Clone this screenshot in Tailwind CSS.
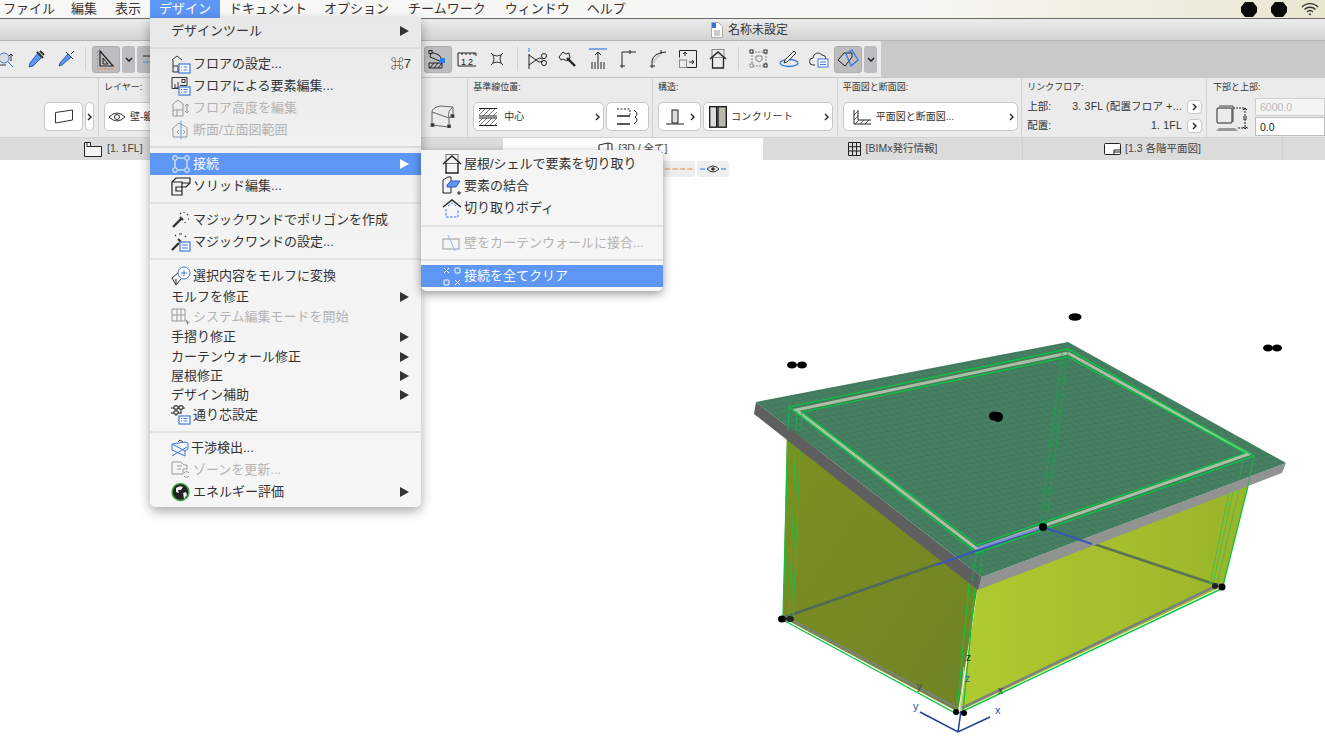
<!DOCTYPE html>
<html lang="ja">
<head>
    <meta charset="UTF-8">
    <title>名称未設定</title>
    <script src="https://cdn.jsdelivr.net/npm/@tailwindcss/browser@4"></script>
</head>
<body class="w-[1325px] h-[751px] overflow-hidden bg-white text-[#333] font-['Liberation_Sans','Noto_Sans_CJK_JP',sans-serif]">
<div class="relative flex flex-col w-[1325px] h-[751px]">

    <!-- menu bar -->
    <div class="flex items-center h-[19px] border-b border-[#6a6a66] bg-linear-to-r from-[#f8f8f8] via-[#f6f6f2] via-70% to-[#e9e6cf] text-[13px] leading-[18px] text-[#333]">
        <span class="pl-[10px] pr-[7px] ml-[-7px]">ファイル</span>
        <span class="px-[9px]">編集</span>
        <span class="px-[9px]">表示</span>
        <span class="w-[70px] h-[18px] text-center bg-[#5e96f5] text-white">デザイン</span>
        <span class="pl-[9px] pr-[7px]">ドキュメント</span>
        <span class="pl-[10px] pr-[9px]">オプション</span>
        <span class="pl-[10px] pr-[9px]">チームワーク</span>
        <span class="pl-[10px] pr-[7px]">ウィンドウ</span>
        <span class="px-[10px]">ヘルプ</span>
        <div class="ml-auto flex items-center gap-[14px] pr-[6px]">
            <svg width="16" height="15" viewBox="0 0 16 15"><polygon points="4,0 12,0 16,5 16,10 12,15 4,15 0,10 0,5" fill="#0a0a0a"/></svg>
            <svg width="16" height="15" viewBox="0 0 16 15"><polygon points="4,0 12,0 16,5 16,10 12,15 4,15 0,10 0,5" fill="#0a0a0a"/></svg>
            <svg width="18" height="14" viewBox="0 0 18 14" fill="none" stroke="#333" stroke-width="1.4"><path d="M1 5c4.500-4.500 11.500-4.500 16 0"/><path d="M3.500 7.500c3-3 8-3 11 0"/><path d="M6 10c1.700-1.600 4.300-1.600 6 0"/><circle cx="9" cy="12.300" r="1" fill="#333" stroke="none"/></svg>
        </div>
    </div>

    <!-- title bar -->
    <div class="flex items-center justify-center gap-[5px] h-[22px] pl-[174px] border-b border-[#b4b4b4] bg-linear-to-b from-[#ececec] to-[#d3d3d3] text-[12px] text-[#333]">
        <svg width="12" height="16" viewBox="0 0 12 16"><path d="M.5.500h7l4 4v11H.5z" fill="#fff" stroke="#aaa"/><path d="M1 1h4v5H1z" fill="#3b6fd8"/><path d="M3 9h6M3 11h6M3 13h6" stroke="#999"/></svg>
        <span>名称未設定</span>
    </div>

    <!-- toolbar -->
    <div class="flex h-[37px] bg-[#c9c9c9] border-b border-[#c6c6c6]">
        <div class="flex items-center w-[881px] bg-[#ebebeb] pr-[4px]">
            <div class="w-[30px] h-[27px] ml-[-9px] flex items-center justify-center">
                <svg width="30" height="22" viewBox="0 0 30 22" fill="none" stroke="#333"><circle cx="13" cy="10" r="5" fill="#ddd" stroke="#3b78e0"/><path d="M17 14l5 5" stroke="#3b78e0"/><path d="M20 13V6M18 8l2-2 2 2M7 17h8" /></svg>
            </div>
            <div class="w-[30px] h-[27px] flex items-center justify-center">
                <svg width="20" height="20" viewBox="0 0 20 20" fill="none" stroke="#333"><path d="M12 4l4 4-9 9-4 1 1-4z" fill="#5e96f5" stroke="#2b58a8"/><path d="M11 3l6 6M14 2l4 4" stroke-width="2"/></svg>
            </div>
            <div class="w-[30px] h-[27px] flex items-center justify-center">
                <svg width="20" height="20" viewBox="0 0 20 20" fill="none" stroke="#333"><path d="M12 5l3 3-9 8-3 1 1-3z" fill="#5e96f5" stroke="#2b58a8"/><path d="M10 3l7 7M15 5l3-3"/></svg>
            </div>
            <div class="w-px h-[24px] ml-[4px] bg-[#d0d0d0]"></div>
            <div class="flex items-center justify-center w-[28px] h-[27px] ml-[6px] rounded-[3px] bg-[#bdbdc0] border border-[#adadad]">
                <svg width="20" height="22" viewBox="0 0 20 22" fill="none" stroke="#222"><path d="M4 3l13 15H4z" stroke-width="1.200"/><path d="M7 10l5 6H7z"/><path d="M1.500 3v18H18" stroke="#e8812f" stroke-dasharray="2 1.500"/></svg>
            </div>
            <div class="flex items-center justify-center w-[13px] h-[27px] ml-[2px] rounded-[3px] bg-[#bdbdc0]">
                <svg width="8" height="5" viewBox="0 0 8 5" fill="none" stroke="#222" stroke-width="1.500"><path d="M1 1l3 3 3-3"/></svg>
            </div>
            <div class="flex items-center pl-[6px] w-[16px] h-[27px] ml-[2px] rounded-[3px] bg-[#bdbdc0]">
                <svg width="7" height="8" viewBox="0 0 7 8" fill="none"><path d="M0 1h7" stroke="#222"/><path d="M0 7h7" stroke="#3b78e0" stroke-dasharray="2 1"/></svg>
            </div>

            <div class="flex items-center justify-center w-[28px] h-[27px] ml-auto rounded-[3px] bg-[#bdbdc0] border border-[#adadad]">
                <svg width="22" height="22" viewBox="0 0 22 22" fill="none" stroke="#222"><path d="M4 4l8 3 4 6M3 9l1-5M3 9l12 5"/><rect x="2" y="2.500" width="3" height="3" fill="#bbb"/><path d="M2 15h13v5H2z" stroke-width="1"/><path d="M3 20l4-5M7 20l4-5M11 20l4-5"/><rect x="13" y="10" width="5" height="5" fill="#2f7bf0" stroke="none"/></svg>
            </div>
            <div class="w-[30px] h-[27px] flex items-center justify-center">
                <svg width="20" height="15" viewBox="0 0 20 15" fill="none" stroke="#222"><path d="M1 1h18v3M1 14V1M19 14H1M5 1v2M9 1v2M13 1v2M17 1v2"/><text x="4" y="12.500" font-size="9" fill="#222" stroke="none" font-family="Liberation Sans">1</text><text x="11" y="12.500" font-size="9" fill="#222" stroke="none" font-family="Liberation Sans">2</text></svg>
            </div>
            <div class="w-[30px] h-[27px] flex items-center justify-center">
                <svg width="14" height="14" viewBox="0 0 14 14" fill="none" stroke="#333"><path d="M3 3q4 2 8 0-2 4 0 8-4-2-8 0 2-4 0-8zM1 1l2 2M13 1l-2 2M1 13l2-2M13 13l-2-2"/></svg>
            </div>
            <div class="w-px h-[24px] ml-[5px] mr-[5px] bg-[#d0d0d0]"></div>
            <div class="w-[30px] h-[27px] flex items-center justify-center">
                <svg width="20" height="22" viewBox="0 0 20 22" fill="none" stroke="#222"><path d="M1 0v4" stroke="#3b78e0"/><path d="M1 6v15"/><path d="M1 7l10 7 4-1M1 17l10-7 4 1"/><circle cx="16" cy="8" r="2.500"/><circle cx="16" cy="15" r="2.500"/></svg>
            </div>
            <div class="w-[30px] h-[27px] flex items-center justify-center">
                <svg width="20" height="20" viewBox="0 0 20 20" fill="none" stroke="#222"><path d="M1 8l4-5 3 2 3-1 1 5-3 3-4-2-2 1z"/><path d="M9 9l8 8" stroke-width="2.400"/></svg>
            </div>
            <div class="w-[30px] h-[27px] flex items-center justify-center">
                <svg width="20" height="22" viewBox="0 0 20 22" fill="none" stroke="#222"><path d="M1 1h18" stroke="#3b78e0" stroke-width="1.200"/><path d="M10 4v17M7 7l3-3 3 3M4 14v7M7 14v7M13 14v7M16 14v7"/></svg>
            </div>
            <div class="w-[30px] h-[27px] flex items-center justify-center">
                <svg width="18" height="20" viewBox="0 0 18 20" fill="none" stroke="#222"><path d="M3 19V3h14M1 17h5M11 1v4" /></svg>
            </div>
            <div class="w-[30px] h-[27px] flex items-center justify-center">
                <svg width="18" height="20" viewBox="0 0 18 20" fill="none" stroke="#222"><path d="M3 19V12Q4 4 17 3M1 17h5M12 1v4"/><path d="M5 14q1-6 7-8" stroke="#ccc" stroke-width="2"/></svg>
            </div>
            <div class="w-[30px] h-[27px] flex items-center justify-center">
                <svg width="18" height="18" viewBox="0 0 18 18" fill="none" stroke="#222"><path d="M.5.500h17v17H8"/><path d="M.5.500v7"/><rect x=".5" y="10" width="7" height="7.500" stroke="#888"/><path d="M6 6V2M4 4l2-2 2 2M10 12h5M13 10l2 2-2 2"/></svg>
            </div>
            <div class="w-[30px] h-[27px] flex items-center justify-center">
                <svg width="18" height="20" viewBox="0 0 18 20" fill="none" stroke="#222"><rect x="3" y=".5" width="12" height="8" stroke="#888"/><path d="M1 10l8-7 8 7" stroke-width="1.500"/><path d="M3.500 9v10h11V9" stroke-width="1.300"/></svg>
            </div>
            <div class="w-px h-[24px] mx-[5px] bg-[#d0d0d0]"></div>
            <div class="w-[30px] h-[27px] flex items-center justify-center">
                <svg width="20" height="20" viewBox="0 0 20 20" fill="none" stroke="#222"><rect x="3" y="3" width="14" height="14" stroke="#888" stroke-dasharray="2 1"/><rect x="1" y="1" width="3" height="3" fill="#fff"/><rect x="15" y="1" width="3" height="3" fill="#fff"/><rect x="15" y="15" width="3" height="3" fill="#fff"/><rect x="1" y="15" width="3" height="3" fill="#fff" stroke="#888"/><path d="M7 7h6v4l-3 2-3-2z" stroke="#888"/></svg>
            </div>
            <div class="w-[30px] h-[27px] flex items-center justify-center">
                <svg width="20" height="18" viewBox="0 0 20 18" fill="none"><ellipse cx="10" cy="13" rx="9" ry="3.500" stroke="#3b78e0" stroke-width="1.300"/><path d="M15 1l2 2-9 9-3 1 1-3z" fill="#fff" stroke="#333"/></svg>
            </div>
            <div class="w-[30px] h-[27px] flex items-center justify-center">
                <svg width="20" height="18" viewBox="0 0 20 18" fill="none" stroke="#333"><path d="M6 15H4a3.500 3.500 0 0 1 0-7 5 5 0 0 1 9-3 4 4 0 0 1 4 4"/><rect x="9" y="9" width="10" height="8" fill="#fff" stroke="#3b78e0"/><path d="M11 12h6M11 14.500h6" stroke="#3b78e0"/></svg>
            </div>
            <div class="flex items-center justify-center w-[28px] h-[27px] rounded-[3px] bg-[#bdbdc0] border border-[#adadad]">
                <svg width="22" height="20" viewBox="0 0 22 20" fill="none"><path d="M1 11l6-7h8v4l-7 9z" stroke="#222" fill="#c8c8c8"/><path d="M9 5l6-4 6 10-7 6z" stroke="#3b78e0" stroke-width="1.300"/></svg>
            </div>
            <div class="flex items-center justify-center w-[13px] h-[27px] ml-[2px] rounded-[3px] bg-[#bdbdc0]">
                <svg width="8" height="5" viewBox="0 0 8 5" fill="none" stroke="#222" stroke-width="1.500"><path d="M1 1l3 3 3-3"/></svg>
            </div>
        </div>
    </div>

    <!-- info box -->
    <div class="flex h-[60px] bg-[#ebebeb] border-b border-[#d2d2d2] text-[#333]">
        <div class="flex items-end gap-[2px] w-[99px] pl-[44px] pb-[6px] border-r border-[#d2d2d2]">
            <div class="flex items-center justify-center w-[39px] h-[29px] bg-white rounded-[5px] border border-[#c8c8c8]">
                <svg width="20" height="15" viewBox="0 0 20 15" fill="none" stroke="#333"><path d="M1.500 3.500l17-2.500v10l-17 3z"/></svg>
            </div>
            <div class="flex items-center justify-center w-[9px] h-[29px] bg-white rounded-[5px] border border-[#c8c8c8]">
                <svg width="5" height="8" viewBox="0 0 5 8" fill="none" stroke="#222" stroke-width="1.400"><path d="M1 1l3 3-3 3"/></svg>
            </div>
        </div>
        <div class="w-[370px] pl-[5px] border-r border-[#d2d2d2]">
            <div class="h-[24px] pt-[3px] text-[9px] leading-[12px]">レイヤー:</div>
            <div class="flex items-center gap-[4px] w-[60px] h-[29px] pl-[3px] bg-white rounded-l-[5px] border border-[#c8c8c8] text-[10px] overflow-hidden whitespace-nowrap">
                <svg width="18" height="12" viewBox="0 0 18 12" class="shrink-0" fill="none" stroke="#333"><path d="M1 6q8-8 16 0-8 8-16 0z"/><circle cx="9" cy="6" r="2.500"/></svg>
                <span>壁-躯体</span>
            </div>
            <div class="absolute left-[430px] top-[104px]">
                <svg width="26" height="24" viewBox="0 0 26 24" fill="none" stroke="#666"><path d="M2 8v13l17 2 0-9-17-6zM2 8q0-4 8-6l13 1v9l-4 2M19 14q-2-7 4-11"/><rect x="1" y="19.500" width="3" height="3" fill="#222"/><rect x="17.500" y="21" width="3" height="3" fill="#222"/><rect x="21" y="10.500" width="3" height="3" fill="#222"/></svg>
            </div>
        </div>

        <div class="w-[185px] pl-[5px] border-r border-[#d2d2d2]">
            <div class="h-[24px] pt-[3px] text-[9px] leading-[12px]">基準線位置:</div>
            <div class="flex gap-[2px]">
                <div class="flex items-center w-[131px] h-[29px] pl-[5px] pr-[3px] bg-white rounded-[5px] border border-[#c8c8c8] text-[10px]">
                    <svg width="18" height="18" viewBox="0 0 18 18" fill="none" stroke="#222"><path d="M0 .5h18M0 8h18M0 10h18M0 17.500h18"/><path d="M0 3l3-3M0 7l7-7M4 8l8-8M9 8l8-8M14 8l4-4M0 14l4-4M0 18l8-8M5 18l8-8M10 18l8-8M15 18l3-3" stroke-width=".6"/></svg>
                    <span class="ml-[7px]">中心</span>
                    <svg width="5" height="8" viewBox="0 0 5 8" class="ml-auto" fill="none" stroke="#222" stroke-width="1.400"><path d="M1 1l3 3-3 3"/></svg>
                </div>
                <div class="flex items-center justify-center w-[43px] h-[29px] bg-white rounded-[5px] border border-[#c8c8c8]">
                    <svg width="24" height="18" viewBox="0 0 24 18" fill="none" stroke="#222"><path d="M1 1h13v6" stroke-dasharray="2 1.500"/><path d="M1 8h13M1 16h13" stroke-width="1.300"/><path d="M19 3q4 3 0 6M19 15q4-3 0-6M18 2l2 2M18 16l2-2"/></svg>
                </div>
            </div>
        </div>

        <div class="w-[185px] pl-[5px] border-r border-[#d2d2d2]">
            <div class="h-[24px] pt-[3px] text-[9px] leading-[12px]">構造:</div>
            <div class="flex gap-[2px]">
                <div class="flex items-center w-[43px] h-[29px] pl-[7px] bg-white rounded-[5px] border border-[#c8c8c8]">
                    <svg width="18" height="16" viewBox="0 0 18 16" fill="none" stroke="#222"><rect x="6" y="1" width="6" height="13" fill="#ddd"/><path d="M0 15h18"/></svg>
                    <svg width="5" height="8" viewBox="0 0 5 8" class="ml-[6px]" fill="none" stroke="#222" stroke-width="1.400"><path d="M1 1l3 3-3 3"/></svg>
                </div>
                <div class="flex items-center w-[130px] h-[29px] pl-[5px] pr-[3px] bg-white rounded-[5px] border border-[#c8c8c8] text-[10px]">
                    <svg width="18" height="22" viewBox="0 0 18 22" stroke="#111"><rect x=".7" y=".7" width="7" height="20.500" fill="#ddd" stroke-width="1.300"/><rect x="9" y=".7" width="8.300" height="20.500" fill="#b9b9b0" stroke-width="1.300"/></svg>
                    <span class="ml-[4px] tracking-[.4px]">コンクリート</span>
                    <svg width="5" height="8" viewBox="0 0 5 8" class="ml-auto" fill="none" stroke="#222" stroke-width="1.400"><path d="M1 1l3 3-3 3"/></svg>
                </div>
            </div>
        </div>

        <div class="w-[185px] pl-[5px] border-r border-[#d2d2d2]">
            <div class="h-[24px] pt-[3px] text-[9px] leading-[12px]">平面図と断面図:</div>
            <div class="flex items-center w-[175px] h-[29px] pl-[9px] pr-[3px] bg-white rounded-[5px] border border-[#c8c8c8] text-[10px]">
                <svg width="18" height="16" viewBox="0 0 18 16" fill="none" stroke="#222"><path d="M1 1v14h17M5 1v10h13"/><path d="M1 6l4-4M1 11l4-4M2 15l4-4M7 15l4-4M12 15l4-4" stroke-width=".7"/></svg>
                <span class="ml-[5px]">平面図と断面図...</span>
                <svg width="5" height="8" viewBox="0 0 5 8" class="ml-auto" fill="none" stroke="#222" stroke-width="1.400"><path d="M1 1l3 3-3 3"/></svg>
            </div>
        </div>

        <div class="w-[185px] pl-[5px] pr-[4px] border-r border-[#d2d2d2] text-[10.500px]">
            <div class="h-[20px] pt-[3px] text-[9px] leading-[12px]">リンクフロア:</div>
            <div class="flex items-center h-[19px] mt-[-1px]">
                <span>上部:</span>
                <span class="ml-auto mr-[5px] tracking-[.2px]">3. 3FL (配置フロア +...</span>
                <div class="flex items-center justify-center w-[15px] h-[14px] bg-white rounded-[4px] border border-[#c8c8c8]">
                    <svg width="5" height="8" viewBox="0 0 5 8" fill="none" stroke="#222" stroke-width="1.400"><path d="M1 1l3 3-3 3"/></svg>
                </div>
            </div>
            <div class="flex items-center h-[20px]">
                <span>配置:</span>
                <span class="ml-auto mr-[5px] tracking-[.2px]">1. 1FL</span>
                <div class="flex items-center justify-center w-[15px] h-[14px] bg-white rounded-[4px] border border-[#c8c8c8]">
                    <svg width="5" height="8" viewBox="0 0 5 8" fill="none" stroke="#222" stroke-width="1.400"><path d="M1 1l3 3-3 3"/></svg>
                </div>
            </div>
        </div>

        <div class="flex-1 pl-[6px] relative">
            <div class="h-[20px] pt-[3px] text-[9px] leading-[12px]">下部と上部:</div>
            <div class="flex">
                <svg width="36" height="32" viewBox="0 0 36 32" class="ml-[3px] mt-[7px]" fill="none" stroke="#222"><rect x="1" y="3" width="15" height="15" rx="1"/><path d="M3 1h14v16" stroke="#444"/><path d="M0 26l3-3h16l3 3z" fill="#999" stroke="none"/><path d="M17 3h12M29 3v8M29 14v10M22 23h10" stroke-dasharray="2 1"/><path d="M27 5l2-2 2 2M27 22l2 2 2-2M27 12h4M27 14h4"/></svg>
                <div class="flex flex-col gap-[1px] ml-[3px]">
                    <div class="w-[70px] h-[18px] pl-[4px] text-[10.500px] leading-[17px] bg-[#f4f4f4] border border-[#cfcfcf] text-[#b8b8b8]">6000.0</div>
                    <div class="w-[70px] h-[19px] pl-[4px] text-[10.500px] leading-[18px] bg-white border border-[#bdbdbd] text-[#222]">0.0</div>
                </div>
            </div>
        </div>
    </div>

    <!-- view tabs -->
    <div class="flex h-[22px] bg-[#dcdcdc] text-[10.500px] text-[#444]">
        <div class="flex items-center gap-[5px] w-[243px] pl-[84px] border-r border-[#cfcfcf]">
            <svg width="18" height="15" viewBox="0 0 18 15" fill="none" stroke="#222"><path d="M.5.500h6v4h11v10H.5z" fill="#f4f4f4"/><path d="M3 .5v4h3"/></svg>
            <span>[1. 1FL]</span>
        </div>
        <div class="w-[260px]"></div>
        <div class="flex items-center justify-center gap-[4px] w-[260px] bg-white">
            <svg width="16" height="14" viewBox="0 0 16 14" fill="none" stroke="#222"><path d="M1 3l9-2 4 1v11H1zM10 1v12"/></svg>
            <span>[3D / 全て]</span>
        </div>
        <div class="flex items-center justify-center gap-[5px] w-[260px] border-r border-[#cfcfcf]">
            <svg width="13" height="14" viewBox="0 0 13 14" fill="none" stroke="#222"><path d="M.5.500h12v13H.5zM4.500.5v13M8.500.5v13M.5 4.700h12M.5 9h12"/></svg>
            <span>[BIMx発行情報]</span>
        </div>
        <div class="flex items-center justify-center gap-[4px] w-[260px] border-r border-[#cfcfcf]">
            <svg width="17" height="12" viewBox="0 0 17 12" fill="none" stroke="#222"><rect x=".5" y=".5" width="16" height="11" rx="1" fill="#fff"/><path d="M10 11V7h7M10 9h7"/></svg>
            <span>[1.3 各階平面図]</span>
        </div>
    </div>

    <!-- 3D window -->
    <div class="relative flex-1 bg-white">
        <div class="absolute left-[660px] top-[1px] flex gap-[2px]">
            <div class="flex items-center justify-end w-[35px] h-[16px] pr-[2px] rounded-r-[3px] bg-[#eeeeee]">
                <svg width="28" height="2" viewBox="0 0 28 2"><path d="M0 1h28" stroke="#f0883a" stroke-width="1" stroke-dasharray="5 2.500"/></svg>
            </div>
            <div class="flex items-center justify-center w-[32px] h-[16px] rounded-[3px] bg-[#eeeeee]">
                <svg width="26" height="10" viewBox="0 0 26 10" fill="none"><path d="M0 5h5M21 5h5" stroke="#2478e8" stroke-width="1.200"/><path d="M7 5q6-6 12 0-6 6-12 0z" stroke="#333"/><circle cx="13" cy="5" r="1.800" fill="#333"/></svg>
            </div>
        </div>

        <svg class="absolute left-0 top-0" width="1325" height="590" viewBox="0 161 1325 590" fill="none">
            <defs>
                <pattern id="tiles" width="7" height="7" patternUnits="userSpaceOnUse" patternTransform="matrix(0.96 -0.185 0.79 0.61 0 0)">
                    <rect width="7" height="7" fill="#467f61"/>
                    <path d="M0 0h7M0 0v7" stroke="#376f54" stroke-width=".8"/>
                </pattern>
                <linearGradient id="wallL" x1="0" y1="0" x2="1" y2="1">
                    <stop offset="0" stop-color="#7e8f20"/>
                    <stop offset="1" stop-color="#6f8427"/>
                </linearGradient>
                <linearGradient id="wallR" x1="0" y1="0" x2="1" y2="0">
                    <stop offset="0" stop-color="#b0ca30"/>
                    <stop offset="1" stop-color="#9ab42b"/>
                </linearGradient>
            </defs>

            <!-- walls -->
            <polygon points="787,425 783,619 958,713 978,586" fill="url(#wallL)"/>
            <polygon points="978,586 1250,478 1223,587 960,712" fill="url(#wallR)"/>
            <polyline points="782,619 940,564" stroke="#4f6a58" stroke-width="2.500"/>
            <polyline points="1085,542 1220,587" stroke="#5b7253" stroke-width="2.500"/>

            <!-- wall edges -->
            <path d="M783 621L957 715L1223 589" stroke="#08c63e" stroke-width="1.400"/>
            <path d="M784 617L957 709M962 709L1220 585" stroke="#7b817c" stroke-width="2.500"/>
            <path d="M788 430L783 620" stroke="#08c63e" stroke-width="1.400"/>
            <path d="M796 430L789 620M801 430L793 620" stroke="#28b845" stroke-width="1"/>
            <path d="M972 555L957 712" stroke="#08c63e" stroke-width="1.300"/>
            <path d="M979 550L963 712" stroke="#08c63e" stroke-width="1.300"/>
            <path d="M1248 487L1223 587" stroke="#08c63e" stroke-width="1.300"/>
            <path d="M1244 470L1217 585M1238 470L1213 585M1234 470L1210 585" stroke="#3cc04a" stroke-width=".9"/>

            <!-- roof slab -->
            <polygon points="756,403 754,415 978,591 982,578" fill="#5f5f5f"/>
            <polygon points="982,578 978,591 1282,474 1286,464" fill="#919390"/>
            <polygon points="756,403 1068,343 1286,464 982,578" fill="url(#tiles)"/>

            <!-- roof outline, drawn through the slab -->
            <polygon points="796,411 1068,354 1249,455 977,550" stroke="#bccbb0" stroke-width="3" opacity=".85"/>
            <polygon points="789,408 1068,350 1254,457 977,554" stroke="#02cb3d" stroke-width="1.200"/>
            <polygon points="802,413 1068,358 1245,454 977,546" stroke="#02cb3d" stroke-width="1.200"/>
            <path d="M1068 352L1046 528M1062 354L1040 528" stroke="#10a848" stroke-width=".9"/>
            <path d="M789 408L788 432M797 412L796 432M802 413L801 432" stroke="#14b84a" stroke-width=".9"/>
            <path d="M977 552L972 582M983 548L979 582" stroke="#08b845" stroke-width=".9"/>
            <path d="M1254 457L1248 487M1243 458L1240 478" stroke="#2cb04a" stroke-width=".9"/>
            <path d="M936 566L1043 528L1092 545" stroke="#3a56b4" stroke-width="2"/>
            <path d="M978 549L1040 529" stroke="#7f93d6" stroke-width="2"/>

            <!-- axes -->
            <path d="M920 713L958 733L990 718M958 733L961 712" stroke="#1c3f97" stroke-width="1.500"/>
            <path d="M964 668L960 712" stroke="#c5cdbb" stroke-width="1"/>
            <text x="913" y="711" font-size="11" fill="#2c4ea3" font-family="Liberation Sans">y</text>
            <text x="995" y="715" font-size="11" fill="#2c4ea3" font-family="Liberation Sans">x</text>
            <text x="965" y="683" font-size="10" fill="#3d57a8" font-family="Liberation Sans">z</text>
            <text x="966" y="662" font-size="10" fill="#222" font-family="Liberation Sans">z</text>
            <text x="917" y="691" font-size="10" fill="#444" font-family="Liberation Sans">y</text>
            <text x="998" y="695" font-size="10" fill="#333" font-family="Liberation Sans">x</text>

            <!-- hotspots -->
            <g fill="#000">
                <ellipse cx="1075" cy="318" rx="6.500" ry="3.800"/>
                <ellipse cx="792" cy="366" rx="5" ry="3.500"/><ellipse cx="802" cy="366" rx="5" ry="3.500"/>
                <ellipse cx="1268" cy="349" rx="5" ry="3.500"/><ellipse cx="1277" cy="349" rx="5" ry="3.500"/>
                <ellipse cx="994" cy="417" rx="5" ry="4.500"/><ellipse cx="998" cy="418" rx="5" ry="5"/>
                <circle cx="1043" cy="528" r="4"/>
                <circle cx="1222" cy="588" r="3.500"/><circle cx="1215" cy="587" r="3" fill="#222"/>
                <ellipse cx="782" cy="620" rx="4" ry="3.500"/><ellipse cx="790" cy="620" rx="4" ry="3" fill="#222"/>
                <circle cx="956" cy="713" r="3"/><circle cx="964" cy="714" r="3"/>
            </g>
        </svg>
    </div>

    <!-- デザイン menu -->
    <div class="absolute left-[150px] top-[18px] flex flex-col w-[271px] h-[489px] pt-[2px] rounded-b-[6px] bg-linear-to-b from-[#e8e8e8] via-[#f2f2f2] via-30% to-[#f6f6f6] shadow-[0_4px_12px_rgba(0,0,0,0.35)] text-[13px] text-[#333]">
        <div class="flex items-center h-[22px] pl-[21px] pr-[12px]">デザインツール<svg width="9" height="10" viewBox="0 0 9 10" class="ml-auto"><polygon points="0,0 9,5 0,10" fill="#333"/></svg></div>
        <div class="flex items-center h-[11px]"><div class="w-full h-[2px] bg-[#dcdcdc]"></div></div>

        <div class="flex items-center h-[22px] pl-[21px] pr-[10px]">
            <svg width="20" height="20" viewBox="0 0 20 20" class="mr-[2px]" fill="none" stroke="#333"><path d="M1 6l5-4 5 4M2 6v12h7M2 12h5v6"/><rect x="8" y="10" width="11" height="9" fill="#fff" stroke="#3b78e0" stroke-width="1.200"/><path d="M10 13h1M12.500 13h4M10 16h1M12.500 16h4" stroke="#3b78e0"/></svg>
            <span>フロアの設定...</span><span class="ml-auto">⌘7</span>
        </div>
        <div class="flex items-center h-[22px] pl-[21px]">
            <svg width="20" height="20" viewBox="0 0 20 20" class="mr-[2px]" fill="none" stroke="#333"><path d="M1 1.500h15v8H9M1 1.500v11h7M4 8v4h3V6"/><rect x="11" y="3.500" width="3" height="3"/><rect x="8" y="11" width="11" height="8" fill="#fff" stroke="#3b78e0" stroke-width="1.200"/><path d="M10 13.500h1M12.500 13.500h4M10 16h1M12.500 16h4" stroke="#3b78e0"/></svg>
            <span>フロアによる要素編集...</span>
        </div>
        <div class="flex items-center h-[22px] pl-[21px] text-[#b3b3b3]">
            <svg width="20" height="20" viewBox="0 0 20 20" class="mr-[2px]" fill="none" stroke="#999"><path d="M1 7l6-5 6 5M2 7v11h10V7M2 12h10M6 12v6M16 6v9M14 8l2-2 2 2M14 13l2 2 2-2"/></svg>
            <span>フロア高度を編集</span>
        </div>
        <div class="flex items-center h-[22px] pl-[21px] text-[#b3b3b3]">
            <svg width="20" height="20" viewBox="0 0 20 20" class="mr-[2px]" fill="none" stroke="#999"><path d="M1 9l7-6 7 4M2 9v8h14V7"/><path d="M10 1v18" stroke="#5e96f5"/><path d="M8 10l-2 2 2 2M12 10l2 2-2 2"/></svg>
            <span>断面/立面図範囲</span>
        </div>
        <div class="flex items-center h-[12px]"><div class="w-full h-[2px] bg-[#dcdcdc]"></div></div>

        <div class="flex items-center h-[22px] pl-[21px] pr-[12px] bg-[#5e96f5] text-white">
            <svg width="20" height="18" viewBox="0 0 20 18" class="mr-[2px]" fill="none" stroke="#fff"><circle cx="4" cy="3" r="2.300"/><circle cx="16" cy="3" r="2.300"/><circle cx="4" cy="15" r="2.300"/><circle cx="16" cy="15" r="2.300"/><path d="M7 3h6M7 15h6M4 6v6M16 6v6"/></svg>
            <span>接続</span>
            <svg width="9" height="10" viewBox="0 0 9 10" class="ml-auto"><polygon points="0,0 9,5 0,10" fill="#fff"/></svg>
        </div>
        <div class="flex items-center h-[22px] pl-[21px]">
            <svg width="20" height="20" viewBox="0 0 20 20" class="mr-[2px]" fill="none" stroke="#222" stroke-width="1.200"><path d="M1 6h10v13H1zM1 6l4-4h14v5l-4 4H5v4h6M11 7h8"/></svg>
            <span>ソリッド編集...</span>
        </div>
        <div class="flex items-center h-[12px]"><div class="w-full h-[2px] bg-[#e2e2e2]"></div></div>

        <div class="flex items-center h-[22px] pl-[21px]">
            <svg width="20" height="20" viewBox="0 0 20 20" class="mr-[2px]" fill="none" stroke="#333"><path d="M2 17l8-8" stroke-width="2.400"/><path d="M9 7l3 3" stroke-width="2"/><path d="M13 2v1M17 4l-1 1M18 9h-1M9 3l1 1M14 13v-1" stroke-width="1.200"/></svg>
            <span>マジックワンドでポリゴンを作成</span>
        </div>
        <div class="flex items-center h-[22px] pl-[21px]">
            <svg width="20" height="20" viewBox="0 0 20 20" class="mr-[2px]" fill="none" stroke="#333"><path d="M1 18l7-7" stroke-width="2.400"/><path d="M7 7l3 3" stroke-width="2"/><path d="M8 2l3 0M14 4l1 1M4 4l1-1" stroke-width="1.200"/><rect x="9" y="10" width="10" height="9" fill="#fff" stroke="#3b78e0" stroke-width="1.200"/><path d="M11 13h6M11 16h6" stroke="#3b78e0"/></svg>
            <span>マジックワンドの設定...</span>
        </div>
        <div class="flex items-center h-[12px]"><div class="w-full h-[2px] bg-[#e2e2e2]"></div></div>

        <div class="flex items-center h-[22px] pl-[21px]">
            <svg width="20" height="20" viewBox="0 0 20 20" class="mr-[2px]" fill="none" stroke="#333"><circle cx="13" cy="7" r="6" fill="#fff" stroke="#3b78e0"/><path d="M13 4v6M10 7h6" stroke="#3b78e0"/><path d="M7 7L1 12l4 7 5-6M5 19v-6"/></svg>
            <span>選択内容をモルフに変換</span>
        </div>
        <div class="flex items-center h-[20px] pl-[21px] pr-[12px]">モルフを修正<svg width="9" height="10" viewBox="0 0 9 10" class="ml-auto"><polygon points="0,0 9,5 0,10" fill="#333"/></svg></div>
        <div class="flex items-center h-[20px] pl-[21px] text-[#b3b3b3]">
            <svg width="20" height="18" viewBox="0 0 20 18" class="mr-[2px]" fill="none" stroke="#999"><path d="M1 1h13v12H1zM6 1v12M10 1v12M1 7h13"/><path d="M14 11l5 4-2 0 0 3z" fill="#888" stroke="none"/></svg>
            <span>システム編集モードを開始</span>
        </div>
        <div class="flex items-center h-[20px] pl-[21px] pr-[12px]">手摺り修正<svg width="9" height="10" viewBox="0 0 9 10" class="ml-auto"><polygon points="0,0 9,5 0,10" fill="#333"/></svg></div>
        <div class="flex items-center h-[19px] pl-[21px] pr-[12px]">カーテンウォール修正<svg width="9" height="10" viewBox="0 0 9 10" class="ml-auto"><polygon points="0,0 9,5 0,10" fill="#333"/></svg></div>
        <div class="flex items-center h-[19px] pl-[21px] pr-[12px]">屋根修正<svg width="9" height="10" viewBox="0 0 9 10" class="ml-auto"><polygon points="0,0 9,5 0,10" fill="#333"/></svg></div>
        <div class="flex items-center h-[19px] pl-[21px] pr-[12px]">デザイン補助<svg width="9" height="10" viewBox="0 0 9 10" class="ml-auto"><polygon points="0,0 9,5 0,10" fill="#333"/></svg></div>
        <div class="flex items-center h-[22px] pl-[21px]">
            <svg width="20" height="20" viewBox="0 0 20 20" class="mr-[2px]" fill="none" stroke="#222"><path d="M5 0v11M10 0v9M0 3h14M0 8h10"/><path d="M3 1h4v3H3zM8 1h4v3H8zM3 6h4v3H3z" fill="#fff"/><rect x="8" y="11" width="11" height="8" fill="#fff" stroke="#3b78e0" stroke-width="1.200"/><path d="M10 13.500h1M12.500 13.500h4M10 16h1M12.500 16h4" stroke="#3b78e0"/></svg>
            <span>通り芯設定</span>
        </div>
        <div class="flex items-center h-[11px]"><div class="w-full h-[2px] bg-[#e2e2e2]"></div></div>

        <div class="flex items-center h-[22px] pl-[21px]">
            <svg width="18" height="18" viewBox="0 0 18 18" class="mr-[2px]" fill="none" stroke="#3b78e0"><path d="M1 5l13 7v5L1 11zM1 5l13-2M14 12l3-2V4L14 3M1 17l15-9"/><path d="M7 3L9 1l3 2" stroke="#333"/></svg>
            <span>干渉検出...</span>
        </div>
        <div class="flex items-center h-[22px] pl-[21px] text-[#b3b3b3]">
            <svg width="20" height="18" viewBox="0 0 20 18" class="mr-[2px]" fill="none" stroke="#999"><path d="M1 1h9l3 3h3v4h-4v5H1zM6 5h5M6 8h4"/><path d="M13 12a3 3 0 0 1 5 0M18 15a3 3 0 0 1-5 0"/></svg>
            <span>ゾーンを更新...</span>
        </div>
        <div class="flex items-center h-[22px] pl-[21px] pr-[12px]">
            <svg width="20" height="20" viewBox="0 0 20 20" class="mr-[2px]"><circle cx="9.500" cy="10" r="8.500" fill="#222" stroke="#4aa84f" stroke-width="1.500"/><path d="M5 6q4-3 7-1l-2 3-3 0 1 3-3-1zM12 11l3-1 1 3-3 4z" fill="#eee"/></svg>
            <span>エネルギー評価</span>
            <svg width="9" height="10" viewBox="0 0 9 10" class="ml-auto"><polygon points="0,0 9,5 0,10" fill="#333"/></svg>
        </div>
    </div>

    <!-- 接続 submenu -->
    <div class="absolute left-[421px] top-[150px] flex flex-col w-[242px] h-[141px] pt-[3px] rounded-[6px] rounded-tl-none bg-linear-to-b from-[#f4f4f4] to-[#f7f7f7] shadow-[0_3px_10px_rgba(0,0,0,0.4)] text-[13px] text-[#333]">
        <div class="flex items-center h-[22px] pl-[21px]">
            <svg width="20" height="20" viewBox="0 0 20 20" class="mr-[2px]" fill="none" stroke="#222"><rect x="4" y=".5" width="12" height="9" stroke="#777"/><path d="M1 10l9-8 9 8" stroke-width="1.500"/><path d="M4 9v10h12V9" stroke-width="1.400"/></svg>
            <span>屋根/シェルで要素を切り取り</span>
        </div>
        <div class="flex items-center h-[22px] pl-[21px]">
            <svg width="20" height="20" viewBox="0 0 20 20" class="mr-[2px]" fill="none" stroke="#222"><path d="M1 4l5-3h3v16H1z" /><path d="M5 9l4-4h9l-4 6H5z" fill="#5e96f5" stroke="#2e5fb8"/><path d="M15 17h4M17 15v4"/></svg>
            <span>要素の結合</span>
        </div>
        <div class="flex items-center h-[22px] pl-[21px]">
            <svg width="20" height="20" viewBox="0 0 20 20" class="mr-[2px]" fill="none"><path d="M1 9l9-7 9 7" stroke="#222" stroke-width="1.400"/><path d="M4 11v8h12v-8M6 8l4-3 4 3" stroke="#3b78e0" stroke-dasharray="2.500 1.500"/></svg>
            <span>切り取りボディ</span>
        </div>
        <div class="flex items-center h-[13px]"><div class="w-full h-[2px] bg-[#e2e2e2]"></div></div>
        <div class="flex items-center h-[22px] pl-[21px] text-[#b3b3b3]">
            <svg width="20" height="18" viewBox="0 0 20 18" class="mr-[2px]" fill="none" stroke="#999"><rect x="1" y="5" width="16" height="10"/><path d="M6 1l7 16" stroke="#8fb5f5"/></svg>
            <span>壁をカーテンウォールに接合...</span>
        </div>
        <div class="flex items-center h-[11px]"><div class="w-full h-[2px] bg-[#e2e2e2]"></div></div>
        <div class="flex items-center h-[22px] pl-[21px] bg-[#5e96f5] text-white">
            <svg width="20" height="20" viewBox="0 0 20 20" class="mr-[2px]" fill="none" stroke="#fff"><path d="M2 2l5 5M7 2l-5 5M13 14l5 5M18 14l-5 5"/><rect x="13" y="2" width="5" height="5" rx="1"/><rect x="2" y="14" width="5" height="5" rx="1"/></svg>
            <span>接続を全てクリア</span>
        </div>
    </div>
</div>
</body>
</html>
